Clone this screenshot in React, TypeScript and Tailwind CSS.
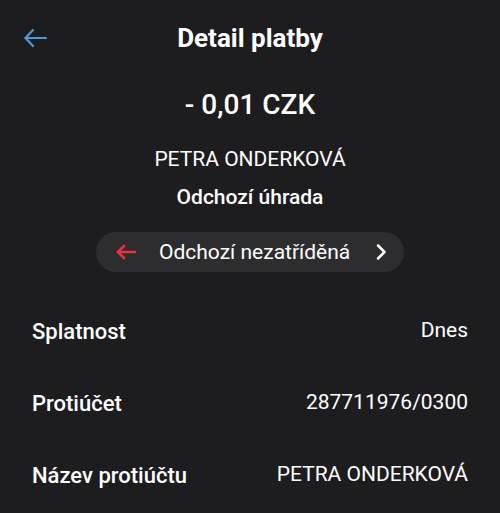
import React from 'react';

const rows = [
  { label: 'Splatnost', value: 'Dnes' },
  { label: 'Protiúčet', value: '287711976/0300' },
  { label: 'Název protiúčtu', value: 'PETRA ONDERKOVÁ' },
];

export default function App() {
  return (
    <div className="w-[500px] h-[513px] overflow-hidden bg-[#1d1d1f] text-white font-['Roboto',sans-serif]">
      <div className="relative h-[76px] flex items-center justify-center">
        <button className="absolute left-[23px] top-[25px] text-[#4a9bd8]">
          <svg width="26" height="26" viewBox="0 0 26 26" fill="none" stroke="currentColor" strokeWidth="2.2" strokeLinecap="round" strokeLinejoin="round">
            <path d="M23 13H2.5" />
            <path d="M10 5l-7.5 8 7.5 8" />
          </svg>
        </button>
        <h1 className="text-[26px] font-bold leading-[32px]">Detail platby</h1>
      </div>

      <div className="flex flex-col items-center">
        <div className="mt-[13px] text-[28px] font-medium leading-[32px]">- 0,01 CZK</div>
        <div className="mt-[26px] text-[21px] leading-[24px]">PETRA ONDERKOVÁ</div>
        <div className="mt-[14px] text-[21px] font-medium leading-[24px]">Odchozí úhrada</div>
        <div className="mt-[23px] w-[308px] h-[40px] rounded-full bg-[#2d2d2f] flex items-center pl-[19px] pr-[15px]">
          <svg width="24" height="24" viewBox="0 0 24 24" fill="none" stroke="#e8323f" strokeWidth="2.6" strokeLinecap="round" strokeLinejoin="round">
            <path d="M20 12H3" />
            <path d="M9 6l-6 6 6 6" />
          </svg>
          <span className="ml-[20px] flex-1 text-[21px] leading-[24px]">Odchozí nezatříděná</span>
          <svg width="16" height="16" viewBox="0 0 16 16" fill="none" stroke="#ffffff" strokeWidth="2.5" strokeLinecap="round" strokeLinejoin="round">
            <path d="M5 1.5L11.5 8 5 14.5" />
          </svg>
        </div>
      </div>

      <div className="mt-[47px] px-[32px] flex flex-col gap-[48px]">
        {rows.map((r) => (
          <div key={r.label} className="flex items-center justify-between h-[24px]">
            <span className="text-[22px] font-medium">{r.label}</span>
            <span className="text-[21px]">{r.value}</span>
          </div>
        ))}
      </div>
    </div>
  );
}
